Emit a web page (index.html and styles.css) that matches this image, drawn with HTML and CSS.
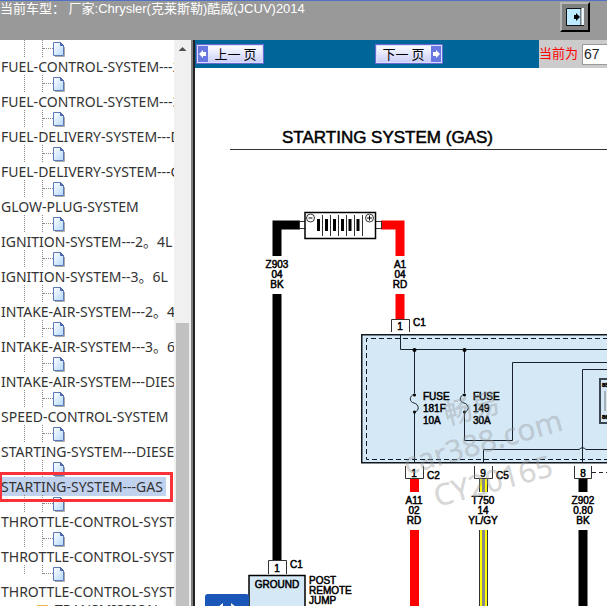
FILE: index.html
```html
<!DOCTYPE html>
<html lang="zh-CN">
<head>
<meta charset="utf-8">
<title>STARTING SYSTEM (GAS)</title>
<link rel="stylesheet" href="styles.css">
</head>
<body>
<svg class="defs" aria-hidden="true">
  <defs>
    <linearGradient id="sheet" x1="0" y1="0" x2="1" y2="1"><stop offset="0" stop-color="#fff"/><stop offset="1" stop-color="#b4d8fb"/></linearGradient>
    <symbol id="doc" viewBox="0 0 12 15">
      <path d="M2 14.500H11.500V5" fill="none" stroke="#aaa"/>
      <path d="M.5 .5H7.500L10.500 3.500V13.500H.5Z" fill="url(#sheet)" stroke="#5b78b8"/>
      <path d="M7.500 .5V3.500H10.500Z" fill="#5478c0" stroke="#4a65a5"/>
    </symbol>
  </defs>
</svg>
<header class="top">
  <h1>当前车型： 厂家:Chrysler(克莱斯勒)酷威(JCUV)2014</h1>
  <button class="exit" aria-label="退出">
    <svg width="18" height="18" viewBox="0 0 18 18"><path fill="#bdebff" d="M0 0H18V18H0Z"/><path d="M.5 17.500V.5H17" stroke="#111" fill="none"/><path d="M15 1V17M0 17.500H18" stroke="#111"/><path d="M16.500 0V17" stroke="#fff" stroke-width="2"/><path d="M8 7H10V5L14 9L10 13V11H8Z"/></svg>
  </button>
</header>
<div class="frames">
  <aside class="side">
    <nav class="tree">
      <ul>
        <li><svg><use href="#doc"/></svg><a href="#">FUEL-CONTROL-SYSTEM---2。4L</a></li>
        <li><svg><use href="#doc"/></svg><a href="#">FUEL-CONTROL-SYSTEM---3。6L</a></li>
        <li><svg><use href="#doc"/></svg><a href="#">FUEL-DELIVERY-SYSTEM---DIESEL</a></li>
        <li><svg><use href="#doc"/></svg><a href="#">FUEL-DELIVERY-SYSTEM---GAS</a></li>
        <li><svg><use href="#doc"/></svg><a href="#">GLOW-PLUG-SYSTEM</a></li>
        <li><svg><use href="#doc"/></svg><a href="#">IGNITION-SYSTEM---2。4L</a></li>
        <li><svg><use href="#doc"/></svg><a href="#">IGNITION-SYSTEM--3。6L</a></li>
        <li><svg><use href="#doc"/></svg><a href="#">INTAKE-AIR-SYSTEM---2。4L</a></li>
        <li><svg><use href="#doc"/></svg><a href="#">INTAKE-AIR-SYSTEM---3。6L</a></li>
        <li><svg><use href="#doc"/></svg><a href="#">INTAKE-AIR-SYSTEM---DIESEL</a></li>
        <li><svg><use href="#doc"/></svg><a href="#">SPEED-CONTROL-SYSTEM</a></li>
        <li><svg><use href="#doc"/></svg><a href="#">STARTING-SYSTEM---DIESEL</a></li>
        <li class="current"><svg><use href="#doc"/></svg><a href="#">STARTING-SYSTEM---GAS</a></li>
        <li><svg><use href="#doc"/></svg><a href="#">THROTTLE-CONTROL-SYSTEM</a></li>
        <li><svg><use href="#doc"/></svg><a href="#">THROTTLE-CONTROL-SYSTEM</a></li>
        <li class="last"><svg><use href="#doc"/></svg><a href="#">THROTTLE-CONTROL-SYSTEM</a></li>
      </ul>
      <a class="folder" href="#"><i></i>TRANSMISSION</a>
    </nav>
    <div class="scroll"><div class="up"></div><div class="thumb"></div></div>
  </aside>
  <main>
    <div class="bar">
      <div class="blue">
        <button class="page prev"><i><svg width="9" height="10" viewBox="0 0 9 10"><path fill="#fff" d="M1 5L5 1V3H8V7H5V9Z"/></svg></i><span>上一 页</span></button>
        <button class="page next"><span>下一 页</span><i><svg width="9" height="10" viewBox="0 0 9 10"><path fill="#fff" d="M8 5L4 1V3H1V7H4V9Z"/></svg></i></button>
      </div>
      <div class="where"><label for="pg">当前为</label><input id="pg" value="67"></div>
    </div>
    <div class="sheet">
      <svg class="diagram" width="600" height="560" viewBox="195 68 600 560">
        <text class="title" x="282" y="143">STARTING SYSTEM (GAS)</text>
        <path class="thin" d="M230 149.500H795"/>
        <!-- battery -->
        <path d="M277 256V225H300" fill="none" stroke="#000" stroke-width="9"/>
        <path d="M277 294V561" stroke="#000" stroke-width="9"/>
        <path d="M381 225H400V256M400 294V320" fill="none" stroke="red" stroke-width="9"/>
        <path class="thin" d="M299.500 221.500H305.500V228.500H299.500ZM375.500 221.500H381.500V228.500H375.500Z"/>
        <path d="M305 212.500H375.500V238.500H305Z" fill="#fff" stroke="#000" stroke-width="1.500"/>
        <path d="M318.500 219V231M326.500 219V231M334.500 219V231M342.500 219V231M350 219V231M358 219V231" stroke="#000" stroke-width="3"/>
        <path class="thin" d="M322.500 215V236M330.500 215V236M338.500 215V236M346.500 215V236M354.500 215V236M362.500 215V236"/>
        <g class="thin"><circle cx="310.500" cy="218" r="4"/><circle cx="369.500" cy="218" r="4"/><path d="M308.500 218H312.500M367 218H372M369.500 215.500V220.500" stroke="#000"/></g>
        <g class="mid"><text x="277" y="268">Z903</text><text x="277" y="278">04</text><text x="277" y="288">BK</text>
        <text x="400" y="268">A1</text><text x="400" y="278">04</text><text x="400" y="288">RD</text></g>
        <path class="thin" d="M391.500 332V319.500H409.500V332"/>
        <text x="400" y="330" class="mid">1</text><text x="413" y="326">C1</text>
        <!-- power distribution module -->
        <path d="M361.750 334.750H800V462.750H361.750Z" fill="#d4e8f6" stroke="#101820" stroke-width="1.500"/>
        <path d="M800 338.500H366.500V459.500H800" fill="none" stroke="#111a2a" stroke-dasharray="5 3"/>
        <path class="wire" d="M400.500 335V349.500H800M414.500 349V393M414.500 413V463M464.500 349V393M464.500 413V440.500H512.500V362.500H800M483.500 463V449.500H579Q582.500 446 586 449.500H800M582.500 463V369.500H800"/>
        <path class="wire" d="M414.500 394C409 396 409 402 414 403S420 411 414.500 412M464.500 394C459 396 459 402 464 403S470 411 464.500 412"/>
        <g><circle cx="414.500" cy="350" r="2"/><circle cx="464.500" cy="350" r="2"/><circle cx="414.500" cy="395" r="1.500"/><circle cx="464.500" cy="395" r="1.500"/><circle cx="414.500" cy="412" r="1.500"/><circle cx="464.500" cy="412" r="1.500"/></g>
        <g><text x="423" y="400">FUSE</text><text x="423" y="412">181F</text><text x="423" y="424">10A</text><text x="473" y="400">FUSE</text><text x="473" y="412">149</text><text x="473" y="424">30A</text></g>
        <path d="M600 379H650V423H600Z" fill="#d4e8f6" stroke="#3a4552" stroke-width="2"/>
        <path d="M605 391V411" stroke="#777"/>
        <text class="tiny" x="602" y="387">85</text><text class="tiny" x="602" y="419">86</text>
        <!-- lower connectors -->
        <path class="thin" d="M405.500 466V478.500H423.500V466M474.500 466V478.500H492.500V466M574.500 466V478.500H591.500V466"/>
        <path d="M592 472.500H800" stroke="#222" stroke-dasharray="4 3"/>
        <g class="mid"><text x="414" y="477">1</text><text x="483" y="477">9</text><text x="583" y="477">8</text></g>
        <text x="427" y="479">C2</text><text x="496" y="479">C5</text>
        <path d="M414.500 479V492M414.500 530V628" stroke="red" stroke-width="9"/>
        <path d="M483.500 479V492M483.500 530V628" stroke="#ff0" stroke-width="8"/>
        <path d="M483.500 479V492M483.500 530V628" stroke="#888" stroke-width="3"/>
        <path d="M479.500 479V492M479.500 530V628M487.500 479V492M487.500 530V628" stroke="#333"/>
        <path d="M583 479V492M583 530V628" stroke="#000" stroke-width="9"/>
        <g class="mid"><text x="414" y="504">A11</text><text x="414" y="514">02</text><text x="414" y="524">RD</text>
        <text x="483" y="504">T750</text><text x="483" y="514">14</text><text x="483" y="524">YL/GY</text>
        <text x="583" y="504">Z902</text><text x="583" y="514">0.80</text><text x="583" y="524">BK</text></g>
        <!-- ground post -->
        <path class="thin" d="M268.500 574V560.500H286.500V574"/>
        <text x="277" y="572" class="mid">1</text><text x="290" y="568">C1</text>
        <path d="M249 575.500H305V640H249Z" fill="#d4e8f6" stroke="#000" stroke-width="1.500"/>
        <text x="277" y="588" class="mid">GROUND</text>
        <text x="309" y="584">POST</text><text x="309" y="594">REMOTE</text><text x="309" y="604">JUMP</text>
        <g class="mark"><text transform="translate(447 425) rotate(-14)" font-size="28">畅易</text><text transform="translate(407 475) rotate(-16)" font-size="30">car388.com</text><text transform="translate(437 507) rotate(-15)" font-size="30">CY20165</text></g>
      </svg>
      <button class="float" aria-label="翻页"><svg width="18" height="14" viewBox="0 0 18 14"><path fill="#fff" d="M0 5L5 1V9ZM18 5L13 1V9Z"/></svg></button>
    </div>
  </main>
</div>
</body>
</html>
```
FILE: styles.css
```css
*, *::before, *::after { box-sizing: border-box; }
body { margin: 0; height: 100vh; overflow: hidden; display: flex; flex-direction: column; background: #fff; font-family: "Liberation Sans", "Noto Sans CJK SC", sans-serif; }
.defs { position: absolute; width: 0; height: 0; }
.top { flex: 0 0 40px; display: flex; justify-content: space-between; background: #999; border-top: 1px solid #4f70c4; padding-right: 17px; }
h1 { margin: 0; font-size: 13px; line-height: 16px; font-weight: 400; color: #fff; white-space: pre; }
.exit { width: 30px; height: 30px; margin-top: 1px; padding: 0; background: #808080; border: 2px solid #000; border-color: #b5b5b5 #000 #000 #b5b5b5; display: flex; align-items: center; justify-content: center; }
.frames { flex: 1; min-height: 0; display: flex; }
.side { flex: 0 0 195px; display: flex; border-right: 2px solid #222; box-shadow: inset -2px 0 #808080; padding-right: 2px; overflow: hidden; }
.tree { flex: 1; min-width: 0; overflow: hidden; font-family: "Noto Sans", "Noto Sans CJK SC", sans-serif; font-size: 14px; }
ul { list-style: none; margin: 0; padding: 0; }
li { position: relative; padding-top: 17px; height: 35px; }
li::before { content: ""; position: absolute; left: 24px; top: 0; width: 19px; height: 17px; border: dotted #888; border-width: 0 1px; }
li::after { content: ""; position: absolute; left: 43px; top: 8px; width: 10px; border-top: 1px dotted #888; }
li svg { position: absolute; left: 53px; top: 2px; width: 12px; height: 15px; }
li.last::before { height: 9px; }
li a, .folder { color: #333; text-decoration: none; white-space: nowrap; }
li a { position: relative; display: block; line-height: 19px; padding-left: 1px; }
.current a { width: 166px; background: #c1d2ee; }
.current::after { left: -1px; top: 12px; width: 174px; height: 30px; border: 3px solid #f83238; z-index: 1; }
.folder { display: flex; gap: 7px; margin-left: 37px; line-height: 19px; }
.folder i { width: 11px; height: 10px; margin-top: 5px; background: #e8b84a; }
.scroll { width: 17px; flex: none; background: #f0f0f0; }
.up { margin: 7px auto 0; width: 8px; height: 4px; background: #505050; clip-path: polygon(50% 0, 100% 100%, 0 100%); }
.thumb { margin: 272px 2px 0; height: 100%; background: #c1c1c1; }
main { flex: 1; min-width: 0; display: flex; flex-direction: column; }
.bar { flex: 0 0 28px; display: flex; background: #069; }
.blue { flex: 1; display: flex; justify-content: space-between; align-items: center; padding: 0 96px 0 1px; }
.page { height: 20px; width: 68px; padding: 0; display: flex; border: 1px solid #6a6ad0; outline: 1px solid #d8dcff; outline-offset: -2px; background: linear-gradient(#fff, #c8ccfa); font: 13px/18px "Noto Sans CJK SC", sans-serif; color: #000; }
.page span { flex: 1; text-align: center; }
.page i { width: 11px; height: 18px; background: #6878e0; display: flex; align-items: center; justify-content: center; }
.where { flex: 0 0 68px; overflow: hidden; display: flex; align-items: center; gap: 4px; background: #ccc; color: red; font-size: 13px; line-height: 16px; white-space: nowrap; }
.where input { flex: none; width: 40px; height: 21px; border: 1px solid #999; padding: 0 1px; font: 14px "Liberation Sans", sans-serif; color: #222; }
.sheet { position: relative; flex: 1; min-height: 0; overflow: hidden; }
.diagram { display: block; font: 10px "Liberation Sans", sans-serif; }
.diagram text { stroke: #000; stroke-width: .5px; }
.diagram .title { font-size: 17px; }
.diagram .tiny { font-size: 6px; font-weight: 700; }
.mid { text-anchor: middle; }
.thin { fill: none; stroke: #333; stroke-width: 1px; }
.wire { fill: none; stroke: #18222c; stroke-width: 1px; }
.diagram .mark text { fill: #999; fill-opacity: .4; stroke: #999; stroke-opacity: .2; font-family: "Noto Sans", "Noto Sans CJK SC", sans-serif; }
.float { position: absolute; left: 10px; top: 526px; width: 44px; height: 44px; padding: 8px 0 0; border: 0; border-radius: 3px; background: #1b57b9; display: flex; justify-content: center; }
```
